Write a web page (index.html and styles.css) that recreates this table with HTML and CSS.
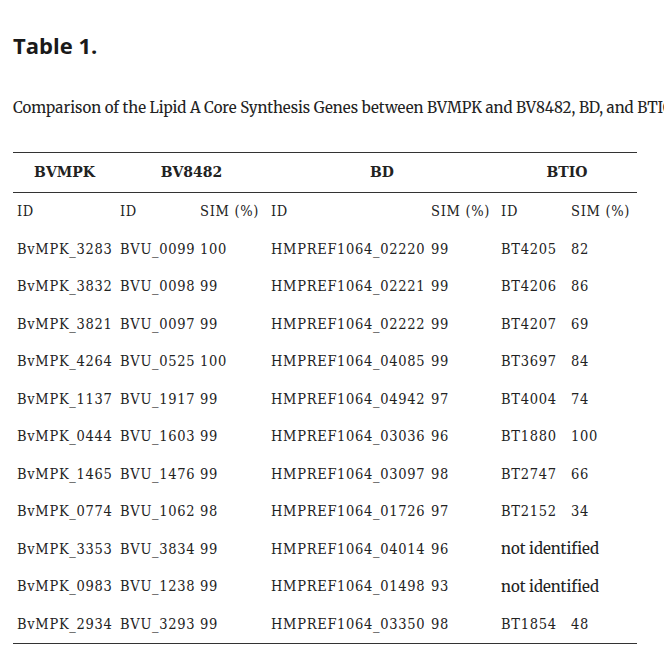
FILE: index.html
```html
<!DOCTYPE html>
<html>
<head>
<meta charset="utf-8">
<link rel="stylesheet" href="styles.css">
</head>
<body>
<div class="page">
  <h2 class="title">Table 1.</h2>
  <p class="caption">Comparison of the Lipid A Core Synthesis Genes between BVMPK and BV8482, BD, and BTIO</p>
  <table class="genes">
    <colgroup>
      <col class="c1"><col class="c2"><col class="c3"><col class="c4"><col class="c5"><col class="c6"><col class="c7">
    </colgroup>
    <thead>
      <tr class="grp">
        <th>BVMPK</th>
        <th colspan="2">BV8482</th>
        <th colspan="2">BD</th>
        <th colspan="2">BTIO</th>
      </tr>
    </thead>
    <tbody>
      <tr><td>ID</td><td>ID</td><td>SIM (%)</td><td>ID</td><td>SIM (%)</td><td>ID</td><td>SIM (%)</td></tr>
      <tr><td>BvMPK_3283</td><td>BVU_0099</td><td>100</td><td>HMPREF1064_02220</td><td>99</td><td>BT4205</td><td>82</td></tr>
      <tr><td>BvMPK_3832</td><td>BVU_0098</td><td>99</td><td>HMPREF1064_02221</td><td>99</td><td>BT4206</td><td>86</td></tr>
      <tr><td>BvMPK_3821</td><td>BVU_0097</td><td>99</td><td>HMPREF1064_02222</td><td>99</td><td>BT4207</td><td>69</td></tr>
      <tr><td>BvMPK_4264</td><td>BVU_0525</td><td>100</td><td>HMPREF1064_04085</td><td>99</td><td>BT3697</td><td>84</td></tr>
      <tr><td>BvMPK_1137</td><td>BVU_1917</td><td>99</td><td>HMPREF1064_04942</td><td>97</td><td>BT4004</td><td>74</td></tr>
      <tr><td>BvMPK_0444</td><td>BVU_1603</td><td>99</td><td>HMPREF1064_03036</td><td>96</td><td>BT1880</td><td>100</td></tr>
      <tr><td>BvMPK_1465</td><td>BVU_1476</td><td>99</td><td>HMPREF1064_03097</td><td>98</td><td>BT2747</td><td>66</td></tr>
      <tr><td>BvMPK_0774</td><td>BVU_1062</td><td>98</td><td>HMPREF1064_01726</td><td>97</td><td>BT2152</td><td>34</td></tr>
      <tr><td>BvMPK_3353</td><td>BVU_3834</td><td>99</td><td>HMPREF1064_04014</td><td>96</td><td colspan="2" class="ni">not identified</td></tr>
      <tr><td>BvMPK_0983</td><td>BVU_1238</td><td>99</td><td>HMPREF1064_01498</td><td>93</td><td colspan="2" class="ni">not identified</td></tr>
      <tr><td>BvMPK_2934</td><td>BVU_3293</td><td>99</td><td>HMPREF1064_03350</td><td>98</td><td>BT1854</td><td>48</td></tr>
    </tbody>
  </table>
</div>
</body>
</html>
```
FILE: styles.css
```css
html, body {
  margin: 0;
  padding: 0;
  background: #ffffff;
  overflow: hidden;
}
.page {
  padding: 30px 0 0 13px;
  color: #222222;
}
.title {
  font-family: "Open Sans", sans-serif;
  font-weight: 700;
  font-size: 22px;
  line-height: 30px;
  margin: 0;
  color: #1a1a1a;
}
.caption {
  font-family: "Merriweather", "Noto Serif", serif;
  font-size: 15px;
  line-height: 24px;
  margin: 36px 0 0 0;
  white-space: nowrap;
  color: #222222;
}
.genes {
  margin-top: 32px;
  border-collapse: collapse;
  table-layout: fixed;
  width: 624px;
  font-family: "DejaVu Serif Condensed", "DejaVu Serif", serif;
  font-size: 14.5px;
  letter-spacing: 0.7px;
  color: #222222;
  border-top: 1.5px solid #333333;
  border-bottom: 1.5px solid #333333;
}
.c1 { width: 103px; }
.c2 { width: 80px; }
.c3 { width: 71px; }
.c4 { width: 160px; }
.c5 { width: 70px; }
.c6 { width: 70px; }
.c7 { width: 70px; }
.genes th {
  font-family: "DejaVu Serif", serif;
  font-weight: 700;
  font-size: 14px;
  letter-spacing: 0;
  text-align: center;
  height: 38.5px;
  padding: 0;
  border-bottom: 1.5px solid #333333;
}
.genes td {
  text-align: left;
  padding: 0 0 0 4px;
  height: 37.5px;
  white-space: nowrap;
  overflow: visible;
}
.genes td.ni {
  font-family: "Merriweather", "Noto Serif", serif;
  font-size: 15px;
  letter-spacing: 0;
}
```
